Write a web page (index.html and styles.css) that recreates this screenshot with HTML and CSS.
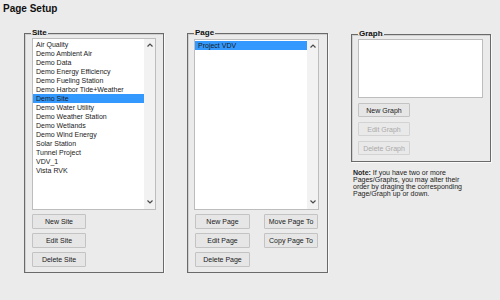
FILE: index.html
```html
<!DOCTYPE html>
<html lang="en">
<head>
    <meta charset="UTF-8">
    <title>Page Setup</title>
    <link rel="stylesheet" href="styles.css">
</head>
<body>

<h1 class="title">Page Setup</h1>

<div class="panels">

    <!-- Sites -->
    <fieldset class="group site-group">
        <legend>Site</legend>
        <div class="listbox site-list">
            <ul class="items">
                <li>Air Quality</li>
                <li>Demo Ambient Air</li>
                <li>Demo Data</li>
                <li>Demo Energy Efficiency</li>
                <li>Demo Fueling Station</li>
                <li>Demo Harbor Tide+Weather</li>
                <li class="selected">Demo Site</li>
                <li>Demo Water Utility</li>
                <li>Demo Weather Station</li>
                <li>Demo Wetlands</li>
                <li>Demo Wind Energy</li>
                <li>Solar Station</li>
                <li>Tunnel Project</li>
                <li>VDV_1</li>
                <li>Vista RVK</li>
            </ul>
            <div class="scrollbar">
                <svg width="6" height="4" viewBox="0 0 6 4"><path d="M0.5 3.5 L3 1 L5.5 3.5" fill="none" stroke="#4a4a4a" stroke-width="1.2"/></svg>
                <svg width="6" height="4" viewBox="0 0 6 4"><path d="M0.5 0.5 L3 3 L5.5 0.5" fill="none" stroke="#4a4a4a" stroke-width="1.2"/></svg>
            </div>
        </div>
        <div class="buttons stack">
            <button>New Site</button>
            <button>Edit Site</button>
            <button>Delete Site</button>
        </div>
    </fieldset>

    <!-- Pages -->
    <fieldset class="group page-group">
        <legend>Page</legend>
        <div class="listbox page-list">
            <ul class="items">
                <li class="selected">Project VDV</li>
            </ul>
            <div class="scrollbar">
                <svg width="6" height="4" viewBox="0 0 6 4"><path d="M0.5 3.5 L3 1 L5.5 3.5" fill="none" stroke="#4a4a4a" stroke-width="1.2"/></svg>
                <svg width="6" height="4" viewBox="0 0 6 4"><path d="M0.5 0.5 L3 3 L5.5 0.5" fill="none" stroke="#4a4a4a" stroke-width="1.2"/></svg>
            </div>
        </div>
        <div class="buttons grid">
            <button>New Page</button>
            <button>Move Page To</button>
            <button>Edit Page</button>
            <button>Copy Page To</button>
            <button>Delete Page</button>
        </div>
    </fieldset>

    <!-- Graphs -->
    <div class="graph-col">
        <fieldset class="group graph-group">
            <legend>Graph</legend>
            <div class="listbox graph-list"></div>
            <div class="buttons stack">
                <button>New Graph</button>
                <button disabled>Edit Graph</button>
                <button disabled>Delete Graph</button>
            </div>
        </fieldset>
        <p class="note"><b>Note:</b> If you have two or more<br>Pages/Graphs, you may alter their<br>order by draging the corresponding<br>Page/Graph up or down.</p>
    </div>

</div>

</body>
</html>
```

FILE: styles.css
```css
body {
    margin: 0;
    background: #ebebeb;
    font-family: 'Liberation Sans', Arial, sans-serif;
    font-size: 7px;
    color: #1a1a1a;
}

.title {
    margin: 3px 0 0 3px;
    font-size: 10px;
    line-height: 12px;
    font-weight: bold;
    color: #111;
}

.panels {
    display: flex;
    align-items: flex-start;
    gap: 23px;
    margin-top: 14px;
    padding-left: 24px;
}

/* group boxes */
.group {
    margin: 0;
    border: 1px solid #6a6a6a;
    box-shadow: inset 1px 1px 0 #d0d0d0, 1px 1px 0 #fafafa;
    min-width: 0;
}

.group legend {
    padding: 0 1px;
    font-size: 8px;
    line-height: 8px;
    font-weight: bold;
    color: #111;
}

.site-group {
    width: 124px;
    padding: 1px 7px 5px 7px;
}

.site-group legend {
    margin-left: -1px;
}

.page-group {
    width: 125px;
    padding: 2px 8px 5px 6px;
}

.graph-group {
    width: 125px;
    padding: 1px 7px 6px 6px;
}

.graph-col {
    margin-top: 1px;
}

/* list boxes */
.listbox {
    display: flex;
    background: #fff;
    border: 1px solid #bdbdbd;
    box-sizing: border-box;
}

.site-list {
    height: 172px;
}

.page-list {
    height: 171px;
}

.graph-list {
    height: 59px;
}

.items {
    flex: 1;
    list-style: none;
    margin: 0;
    padding: 1px 0 0 0;
}

.items li {
    height: 9px;
    line-height: 9px;
    padding-left: 3px;
    white-space: nowrap;
}

.items li.selected {
    background: #3399ff;
}

.scrollbar {
    width: 11px;
    background: #f2f2f2;
    display: flex;
    flex-direction: column;
    justify-content: space-between;
    align-items: center;
    padding: 4px 0 5px 0;
}

.scrollbar svg {
    display: block;
}

/* buttons */
.buttons {
    margin-top: 4px;
}

.stack {
    display: flex;
    flex-direction: column;
    align-items: flex-start;
    gap: 4px;
}

.grid {
    display: grid;
    grid-template-columns: 55px 54px;
    column-gap: 14px;
    row-gap: 4px;
    margin-left: 1px;
}

button {
    height: 15px;
    width: 54px;
    padding: 0;
    background: #e6e6e6;
    border: 1px solid #c3c3c3;
    border-radius: 1px;
    font-family: 'Liberation Sans', Arial, sans-serif;
    font-size: 7px;
    color: #1a1a1a;
}

.grid button {
    width: 100%;
}

.graph-group .buttons {
    margin-top: 5px;
    gap: 5px;
}

.graph-group button {
    width: 52px;
    height: 14px;
}

button:disabled {
    color: #a9a9a9;
    border-color: #d3d3d3;
    background: #e9e9e9;
}

.note {
    margin: 7px 0 0 2px;
    font-size: 7px;
    line-height: 7px;
    color: #222;
}
```
